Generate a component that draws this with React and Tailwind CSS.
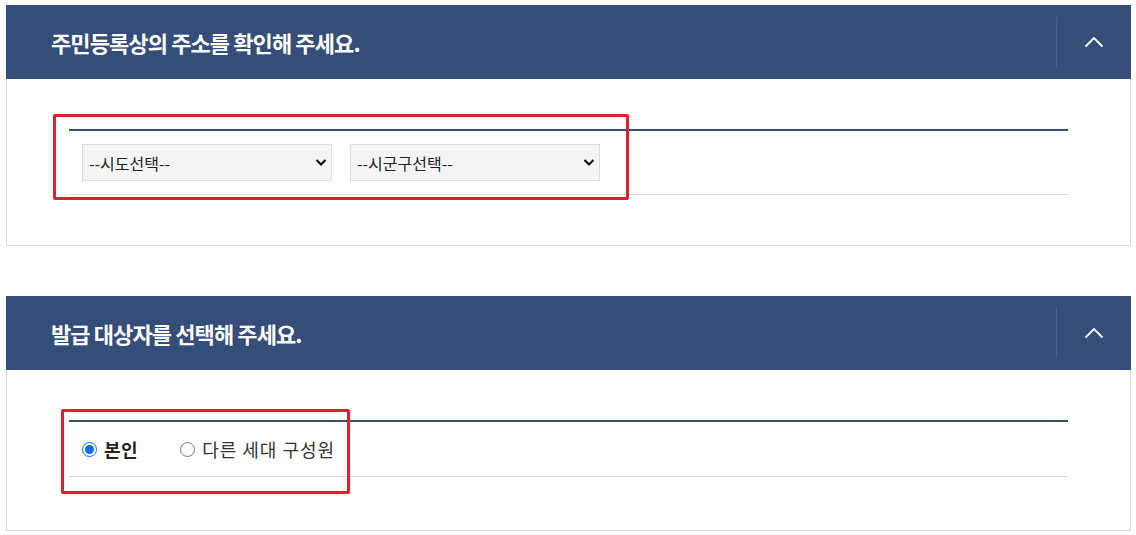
import { useState } from 'react'

const KR = { fontFamily: '"Noto Sans CJK KR", "Noto Sans", sans-serif' }

function Chevron() {
  return (
    <svg width="20" height="12" viewBox="0 0 20 12" fill="none">
      <path d="M1.5 10.5 L10 2 L18.5 10.5" stroke="#fff" strokeWidth="1.8" />
    </svg>
  )
}

function Panel({ title, children }) {
  return (
    <section className="mx-[6px] w-[1125px]">
      <div className="flex items-center h-[74px] bg-[#344d79]">
        <h2 className="flex-1 pl-[45px] text-[22px] font-bold text-white tracking-[-0.9px]" style={KR}>
          {title}
        </h2>
        <div className="h-[50px] w-px bg-[#4a6290]" />
        <button className="flex w-[74px] h-full items-center justify-center">
          <Chevron />
        </button>
      </div>
      {children}
    </section>
  )
}

function SelectBox({ label }) {
  return (
    <div className="relative w-[250px] h-[37px]">
      <select
        className="appearance-none w-full h-full bg-[#f4f4f4] border border-[#dcdcdc] pl-[6px] text-[16px] text-[#222] outline-none"
        style={KR}
        defaultValue=""
      >
        <option value="">{label}</option>
      </select>
      <svg className="absolute right-[5px] top-[14px] pointer-events-none" width="12" height="9" viewBox="0 0 12 9" fill="none">
        <path d="M1.5 2 L6 6.5 L10.5 2" stroke="#111" strokeWidth="2.2" />
      </svg>
    </div>
  )
}

export default function App() {
  const [who, setWho] = useState('self')

  return (
    <div className="relative w-[1136px] h-[535px] bg-white pt-[5px] overflow-hidden" style={KR}>
      <Panel title="주민등록상의 주소를 확인해 주세요.">
        <div className="border border-t-0 border-[#d9d9d9] px-[62px] pt-[50px] pb-[50px]">
          <div className="border-t-2 border-b border-t-[#344d79] border-b-[#d9d9d9] flex gap-[18px] px-[13px] py-[13px]">
            <SelectBox label="--시도선택--" />
            <SelectBox label="--시군구선택--" />
          </div>
        </div>
      </Panel>

      <div className="h-[50px]" />

      <Panel title="발급 대상자를 선택해 주세요.">
        <div className="border border-t-0 border-[#d9d9d9] px-[62px] pt-[50px] pb-[53px]">
          <div className="border-t-2 border-b border-t-[#344d79] border-b-[#d9d9d9] flex items-center h-[57px] px-[13px] gap-[42px]">
            <label className="flex items-center gap-[7px] text-[18px] font-bold text-[#222]">
              <input
                type="radio"
                name="who"
                checked={who === 'self'}
                onChange={() => setWho('self')}
                className="w-[15px] h-[15px] m-0 accent-[#0a6cff]"
              />
              <span className="tracking-[0.5px]">본인</span>
            </label>
            <label className="flex items-center gap-[7px] text-[18px] text-[#333]">
              <input
                type="radio"
                name="who"
                checked={who === 'other'}
                onChange={() => setWho('other')}
                className="w-[15px] h-[15px] m-0 accent-[#0a6cff]"
              />
              <span className="tracking-[1px]">다른 세대 구성원</span>
            </label>
          </div>
        </div>
      </Panel>

      {/* annotation boxes */}
      <div className="absolute left-[53px] top-[114px] w-[576px] h-[86px] border-[3px] border-[#ea1c2a] rounded-[2px] pointer-events-none" />
      <div className="absolute left-[61px] top-[409px] w-[289px] h-[85px] border-[3px] border-[#ea1c2a] rounded-[2px] pointer-events-none" />
    </div>
  )
}
